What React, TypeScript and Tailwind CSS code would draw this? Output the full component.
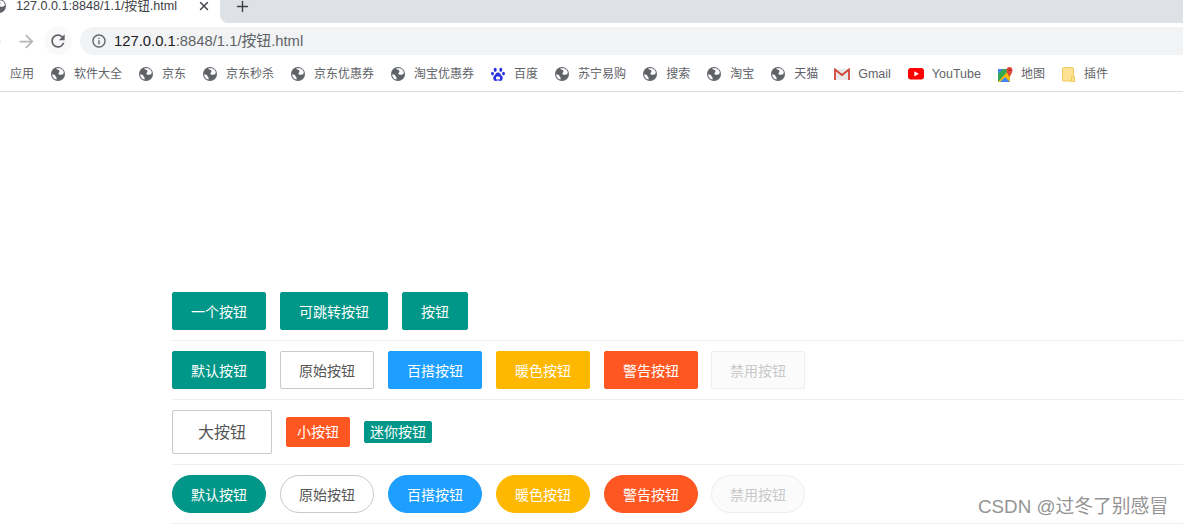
import { Plus, X } from 'lucide-react';
import { MdArrowBack, MdArrowForward, MdInfoOutline, MdRefresh } from 'react-icons/md';

const cjk = "font-['Liberation_Sans','Noto_Sans_CJK_SC',sans-serif]";

const Globe = ({ className = '' }: { className?: string }) => (
  <svg width="14" height="14" viewBox="0 0 14 14" className={`shrink-0 ${className}`}>
    <circle cx="7" cy="7" r="7" fill="#5f6368" />
    <path d="M5 1.600c.8 1.400 3 .9 3.400 2.300S6.800 6 7.400 7.100s3 .6 4.500.1 1-3-.6-4.600S7 .9 5 1.600z" fill="#fff" />
    <path d="M1.400 7.200c1.500-.2 3 .9 3.500 2.300s1.100 1.500.6 3C3 12 1 10 1.400 7.200z" fill="#fff" />
  </svg>
);

const BaiduIcon = () => (
  <svg width="14" height="15" viewBox="0 0 14 15" className="shrink-0">
    <ellipse cx="4.200" cy="2.800" rx="1.500" ry="2.100" fill="#2932e1" />
    <ellipse cx="9.800" cy="2.800" rx="1.500" ry="2.100" fill="#2932e1" />
    <ellipse cx="1.500" cy="6.600" rx="1.400" ry="1.900" fill="#2932e1" />
    <ellipse cx="12.500" cy="6.600" rx="1.400" ry="1.900" fill="#2932e1" />
    <path d="M7 5.500c-2 0-2.500 2.200-4 3.500-1.300 1.200-.8 5 1.700 5 1 0 1.500-.4 2.300-.4s1.300.4 2.300.4c2.500 0 3-3.800 1.700-5C9.500 7.700 9 5.500 7 5.500z" fill="#2932e1" />
    <rect x="5" y="9.500" width="4" height="3" rx="1" fill="#fff" />
  </svg>
);

const GmailIcon = () => (
  <svg width="16" height="12" viewBox="0 0 16 12" className="shrink-0">
    <rect x="1" y="1" width="14" height="11" fill="#e8e8e8" />
    <path d="M1 12V1.500L8 7l7-5.500V12" fill="none" stroke="#d0453a" strokeWidth="1.800" />
  </svg>
);

const YoutubeIcon = () => (
  <svg width="16" height="12" viewBox="0 0 16 12" className="shrink-0">
    <rect width="16" height="11.500" rx="3" fill="#f00" />
    <path d="M6.300 3.200v5.200L10.800 5.800z" fill="#fff" />
  </svg>
);

const MapsIcon = () => (
  <svg width="15" height="15" viewBox="0 0 15 15" className="shrink-0">
    <path d="M0 2h12v13H0z" fill="#35a853" />
    <path d="M0 2h5L0 7z" fill="#4285f4" />
    <path d="M0 15L9 5l3 4v6z" fill="#fbbc05" />
    <path d="M2 15l5-5 5 5z" fill="#4285f4" />
    <path d="M11.500 0C9.800 0 8.500 1.300 8.500 3c0 2.500 3 7 3 7s3-4.500 3-7c0-1.700-1.300-3-3-3z" fill="#e0483e" />
    <circle cx="11.500" cy="3" r="1" fill="#9c2a22" />
  </svg>
);

const FolderIcon = () => (
  <svg width="13" height="15" viewBox="0 0 13 15" className="shrink-0">
    <path d="M.5 1.500a1 1 0 0 1 1-1h8.500a1.500 1.500 0 0 1 1.500 1.500v12H1.500a1 1 0 0 1-1-1z" fill="#fde293" stroke="#f4c95d" />
    <rect x="9.500" y="10" width="3" height="4.500" fill="#fde293" stroke="#f4c95d" />
  </svg>
);

const bookmarks = [
  { label: '软件大全' },
  { label: '京东' },
  { label: '京东秒杀' },
  { label: '京东优惠券' },
  { label: '淘宝优惠券' },
  { label: '百度', icon: <BaiduIcon /> },
  { label: '苏宁易购' },
  { label: '搜索' },
  { label: '淘宝' },
  { label: '天猫' },
  { label: 'Gmail', icon: <GmailIcon />, box: 'ml-[16px] gap-[8px]', text: 'text-[12.500px]' },
  { label: 'YouTube', icon: <YoutubeIcon />, box: 'ml-[17px] gap-[8px]', text: 'text-[12.500px]' },
  { label: '地图', icon: <MapsIcon />, box: 'ml-[17px] gap-[8px]' },
  { label: '插件', icon: <FolderIcon /> },
];

const base = 'inline-flex items-center justify-center box-border whitespace-nowrap border';
const normal = 'h-[38px] px-[18px] pt-[2px] text-sm';
const square = 'rounded-[2px]';
const round = 'rounded-full';

const variants = [
  { label: '默认按钮', color: 'bg-[#009688] border-[#009688] text-white' },
  { label: '原始按钮', color: 'bg-white border-[#c9c9c9] text-[#555555]' },
  { label: '百搭按钮', color: 'bg-[#1e9fff] border-[#1e9fff] text-white' },
  { label: '暖色按钮', color: 'bg-[#ffb800] border-[#ffb800] text-white' },
  { label: '警告按钮', color: 'bg-[#ff5722] border-[#ff5722] text-white' },
  { label: '禁用按钮', color: '-ml-[1px] bg-[#fbfbfb] border-[#eeeeee] text-[#c9c9c9]' },
];

const teal = 'bg-[#009688] border-[#009688] text-white';

export default function App() {
  return (
    <div className={`relative h-[526px] w-[1183px] overflow-hidden bg-white ${cjk}`}>
      {/* tab strip */}
      <div className="flex h-[23px] bg-white">
        <div className="relative flex w-[220px] shrink-0 items-start bg-white pl-[16px] text-[12.600px] leading-[13px] text-[#3c4043]">
          <Globe className="absolute -left-[8px] top-[-1px]" />
          <span className="whitespace-nowrap">127.0.0.1:8848/1.1/按钮.html</span>
          <X size={14} strokeWidth={2.5} className="absolute left-[197px] top-[-1px] text-[#45484c]" />
        </div>
        <div className="flex flex-1 items-center rounded-bl-[8px] bg-[#dee1e6] pl-[14px]">
          <Plus size={17} strokeWidth={2} className="-mt-[11px] text-[#3c4043]" />
        </div>
      </div>

      {/* toolbar */}
      <div className="flex h-[32px] items-start bg-white pt-[4px]">
        <MdArrowBack size={21} className="ml-[-17px] mt-[4px] text-[#b5b7b9]" />
        <MdArrowForward size={21} className="ml-[12px] mt-[4px] text-[#b5b7b9]" />
        <div className="ml-[7px] flex h-[28px] w-[28px] items-center justify-center rounded-full bg-[#f9f9fa]">
          <MdRefresh size={20} className="text-[#5f6368]" />
        </div>
        <div className="ml-[8px] flex h-[28px] flex-1 items-center rounded-l-full bg-[#f1f3f4] pl-[11px]">
          <MdInfoOutline size={16} className="text-[#5f6368]" />
          <span className="ml-[7px] whitespace-nowrap text-[14.800px]">
            <span className="text-[#202124]">127.0.0.1</span>
            <span className="text-[#5f6368]">:8848/1.1/按钮.html</span>
          </span>
        </div>
      </div>

      {/* bookmarks */}
      <div className="flex h-[37px] items-center border-b border-[#dadce0] pl-[10px] pt-[2px] text-xs text-[#5f6368]">
        <span>应用</span>
        {bookmarks.map((b) => (
          <div key={b.label} className={`flex items-center ${b.box ?? 'ml-[17px] gap-[9px]'}`}>
            {b.icon ?? <Globe />}
            <span className={`whitespace-nowrap ${b.text ?? ''}`}>{b.label}</span>
          </div>
        ))}
      </div>

      {/* demo rows */}
      <div className="ml-[172px] pt-[190px]">
        <div className="flex gap-[14px] border-b border-[#eeeeee] py-[10px]">
          <button className={`${base} ${normal} ${square} ${teal}`}>一个按钮</button>
          <button className={`${base} ${normal} ${square} ${teal}`}>可跳转按钮</button>
          <button className={`${base} ${normal} ${square} ${teal}`}>按钮</button>
        </div>
        <div className="flex gap-[14px] border-b border-[#eeeeee] py-[10px]">
          {variants.map((v) => (
            <button key={v.label} className={`${base} ${normal} ${square} ${v.color}`}>{v.label}</button>
          ))}
        </div>
        <div className="flex items-center gap-[14px] border-b border-[#eeeeee] py-[10px]">
          <button className={`${base} ${square} h-[44px] w-[100px] border-[#c9c9c9] bg-white pt-[2px] text-base text-[#555555]`}>大按钮</button>
          <button className={`${base} ${square} h-[30px] w-[64px] border-[#ff5722] bg-[#ff5722] text-sm text-white`}>小按钮</button>
          <button className={`${base} ${square} h-[22px] w-[68px] text-sm ${teal}`}>迷你按钮</button>
        </div>
        <div className="flex gap-[14px] border-b border-[#eeeeee] py-[10px]">
          {variants.map((v) => (
            <button key={v.label} className={`${base} ${normal} ${round} ${v.color}`}>{v.label}</button>
          ))}
        </div>
      </div>

      {/* watermark */}
      <div className="absolute left-[978px] top-[493px] whitespace-nowrap text-[18.800px] text-[#949494]">CSDN @过冬了别感冒</div>
    </div>
  );
}
